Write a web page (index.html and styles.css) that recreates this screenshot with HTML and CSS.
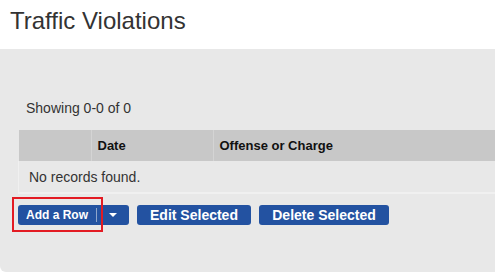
FILE: index.html
```html
<!DOCTYPE html>
<html>
<head>
<meta charset="utf-8">
<link rel="stylesheet" href="styles.css">
</head>
<body>
<header class="page-head"><h1 class="title">Traffic Violations</h1></header>
<section class="panel">
  <div class="count">Showing 0-0 of 0</div>
  <table class="grid">
    <thead>
      <tr><th class="c-sel"></th><th class="c-date">Date</th><th class="c-off">Offense or Charge</th></tr>
    </thead>
    <tbody>
      <tr><td class="empty" colspan="3">No records found.</td></tr>
    </tbody>
  </table>
  <div class="actions">
    <div class="split">
      <span class="highlight"></span>
      <button class="btn btn-add">Add a Row</button><span class="sep"></span><button class="btn btn-caret"><span class="caret"></span></button>
    </div>
    <button class="btn btn-wide">Edit Selected</button>
    <button class="btn btn-wide btn-del">Delete Selected</button>
  </div>
</section>
</body>
</html>
```
FILE: styles.css
```css
html, body {
  margin: 0;
  padding: 0;
  background: #ffffff;
  font-family: "Liberation Sans", Arial, sans-serif;
  color: #333333;
}
.page-head {
  height: 49px;
  padding-left: 10px;
  box-sizing: border-box;
}
.title {
  margin: 0;
  padding-top: 7px;
  font-size: 24px;
  font-weight: normal;
  line-height: 27px;
  color: #333333;
}
.panel {
  background: #e8e8e8;
  height: 223px;
  box-sizing: border-box;
  padding: 50px 0 0 18px;
  border-bottom-left-radius: 6px;
}
.count {
  font-size: 14px;
  line-height: 18px;
  padding-left: 8px;
  height: 31px;
}
.grid {
  border-collapse: collapse;
  width: 500px;
  font-size: 13px;
}
.grid th {
  background: #c8c8c8;
  height: 31px;
  padding: 0 0 0 6px;
  text-align: left;
  font-weight: bold;
  color: #111111;
  border-left: 1px solid #d4d4d4;
}
.grid th.c-sel { width: 66px; border-left: none; }
.grid th.c-date { width: 115px; }
.grid td.empty {
  height: 31px;
  padding: 0 0 0 10px;
  font-size: 14px;
  color: #333333;
  border-left: 1px solid #f0f0f0;
  border-bottom: 2px solid #f0f0f0;
}
.actions {
  display: flex;
  align-items: center;
  gap: 8px;
  margin-top: 11px;
}
.split {
  position: relative;
  display: flex;
  height: 20px;
  background: #2352a1;
  border-radius: 3px;
}
.highlight {
  position: absolute;
  left: -6px;
  top: -8px;
  width: 91px;
  height: 35px;
  box-sizing: border-box;
  border: 2px solid #e31b23;
  pointer-events: none;
}
.btn {
  border: none;
  margin: 0;
  font-family: "Liberation Sans", Arial, sans-serif;
  font-weight: bold;
  color: #ffffff;
  background: #2352a1;
  height: 20px;
  border-radius: 3px;
  cursor: pointer;
}
.btn-add {
  font-size: 12px;
  padding: 0 8px 0 8px;
  background: transparent;
}
.sep {
  width: 1px;
  height: 14px;
  margin-top: 3px;
  background: #8ea5cc;
}
.btn-caret {
  width: 32px;
  padding: 0 1px 0 0;
  background: transparent;
  display: flex;
  align-items: center;
  justify-content: center;
}
.caret {
  width: 0;
  height: 0;
  border-left: 4px solid transparent;
  border-right: 4px solid transparent;
  border-top: 4px solid #ffffff;
}
.btn-wide {
  font-size: 14px;
  padding: 0 12px;
  width: 114px;
}
.btn-del {
  width: 130px;
  padding: 0 12px;
}
```
